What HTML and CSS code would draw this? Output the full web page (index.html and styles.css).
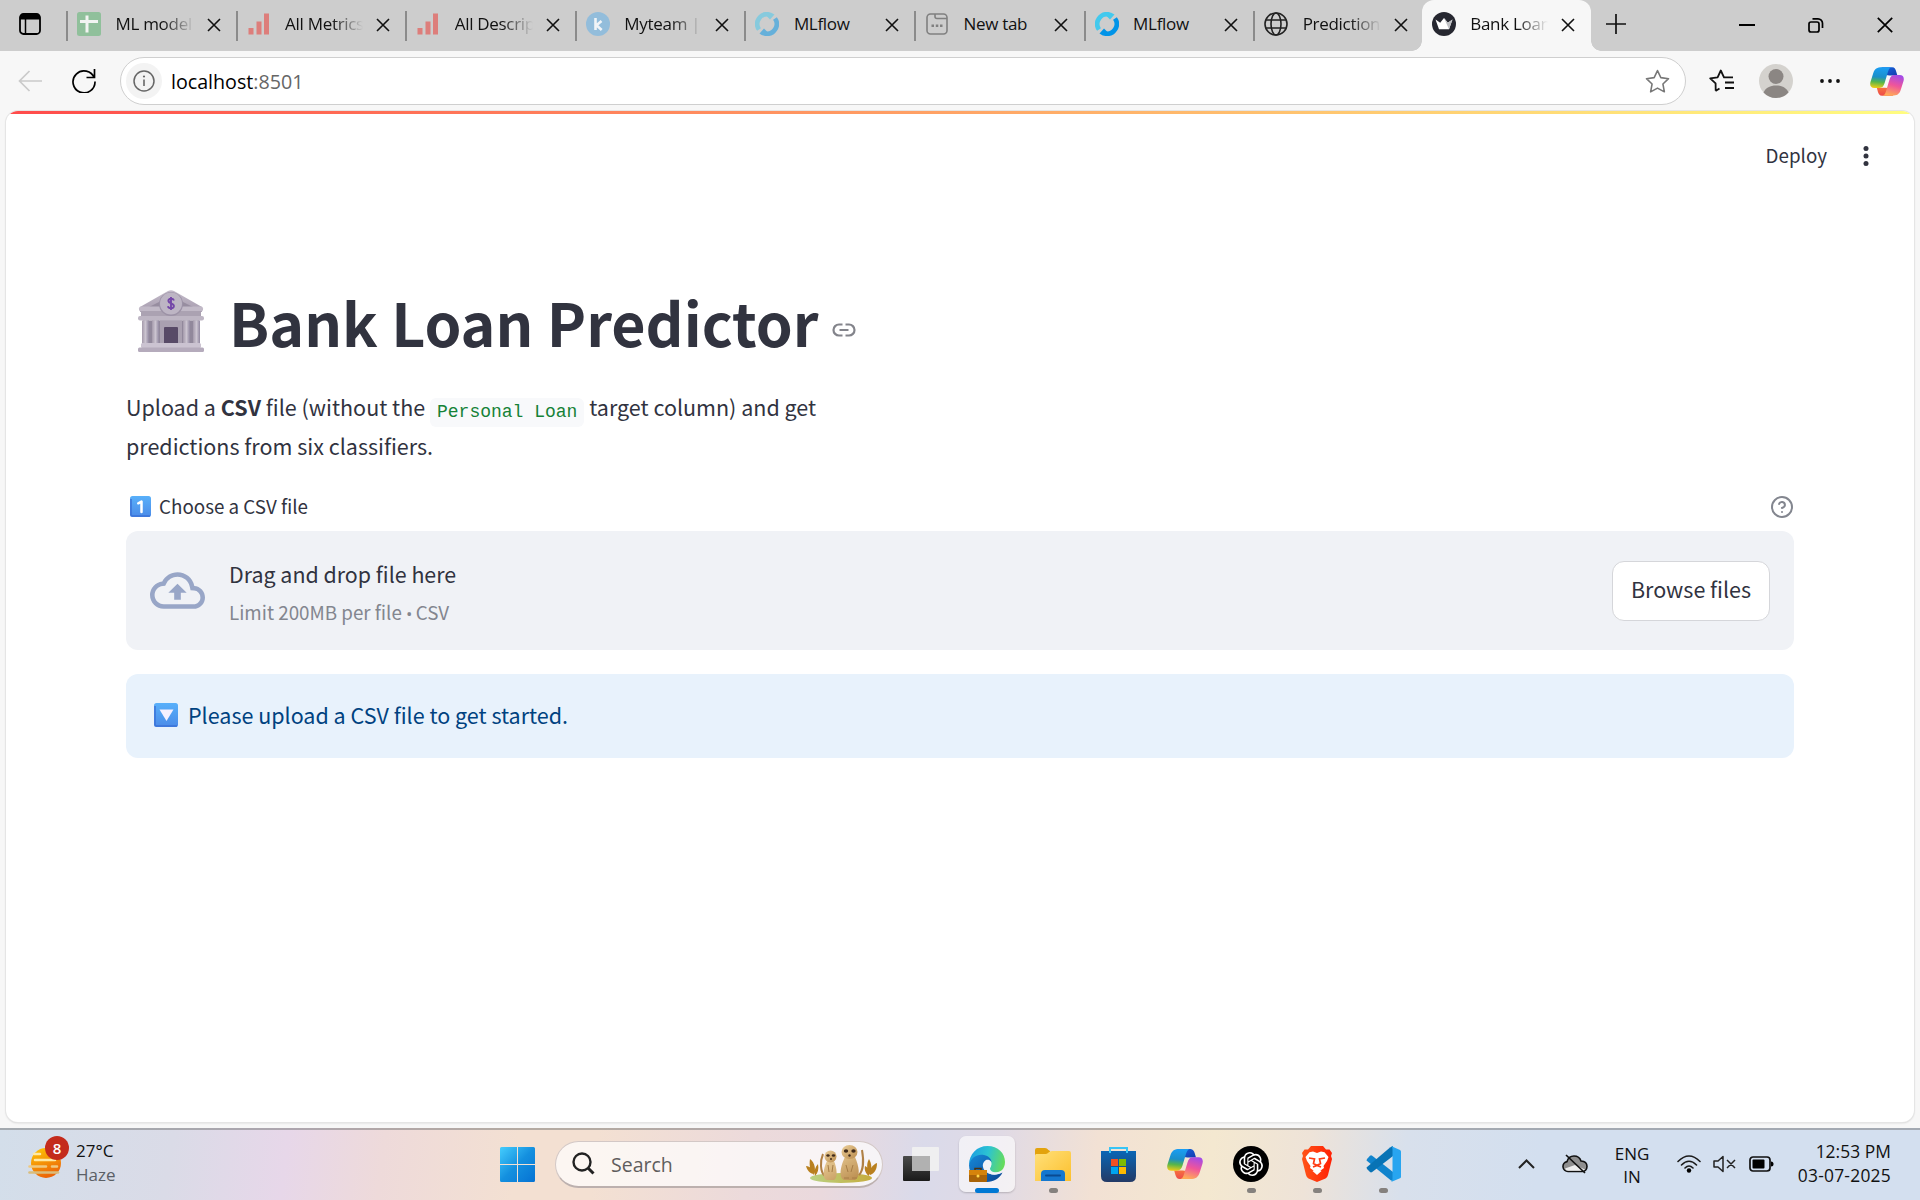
FILE: index.html
```html
<!DOCTYPE html>
<html lang="en">
<head>
<meta charset="utf-8">
<title>Bank Loan Predictor</title>
<link rel="stylesheet" href="styles.css">
</head>
<body>
<svg class="defs" aria-hidden="true">
  <defs>
    <linearGradient id="cpA" x1="0.3" y1="0" x2="0.2" y2="1"><stop offset="0" stop-color="#1a9df2"/><stop offset=".45" stop-color="#1b8fc9"/><stop offset=".7" stop-color="#56b54b"/><stop offset="1" stop-color="#f5cd14"/></linearGradient>
    <linearGradient id="cpB" x1="0.7" y1="0" x2="0.4" y2="1"><stop offset="0" stop-color="#a34be8"/><stop offset=".5" stop-color="#f0559a"/><stop offset="1" stop-color="#ffab57"/></linearGradient>
    <linearGradient id="cpC" x1="0" y1="0" x2="1" y2="1"><stop offset="0" stop-color="#1667e0"/><stop offset="1" stop-color="#143cae"/></linearGradient>
    <linearGradient id="cpD" x1="0" y1="0" x2="0" y2="1"><stop offset="0" stop-color="#f6713f"/><stop offset="1" stop-color="#ee4b4b"/></linearGradient>
    <linearGradient id="stone" x1="0" y1="0" x2="0" y2="1"><stop offset="0" stop-color="#c4bbca"/><stop offset="1" stop-color="#a69cae"/></linearGradient>
    <linearGradient id="pillar" x1="0" y1="0" x2="1" y2="0"><stop offset="0" stop-color="#a49aab"/><stop offset=".5" stop-color="#cbc4d0"/><stop offset="1" stop-color="#9188a0"/></linearGradient>
    <linearGradient id="key" x1="0" y1="0" x2="0" y2="1"><stop offset="0" stop-color="#58b0fa"/><stop offset="1" stop-color="#4b8be8"/></linearGradient>
    <linearGradient id="sun" x1="0" y1="0" x2=".4" y2="1"><stop offset="0" stop-color="#ffca05"/><stop offset="1" stop-color="#ec6608"/></linearGradient>
    <linearGradient id="win" x1="0" y1="0" x2="1" y2="1"><stop offset="0" stop-color="#45cdfd"/><stop offset=".5" stop-color="#1490df"/><stop offset="1" stop-color="#0572d3"/></linearGradient>
    <linearGradient id="edge" x1="0" y1=".3" x2="1" y2=".5"><stop offset="0" stop-color="#1b9de2"/><stop offset=".5" stop-color="#2cc3d2"/><stop offset="1" stop-color="#66dc5b"/></linearGradient>
    <linearGradient id="edge2" x1="0" y1="0" x2="1" y2="1"><stop offset="0" stop-color="#1689d8"/><stop offset="1" stop-color="#0c4593"/></linearGradient>
    <linearGradient id="fold" x1="0" y1="0" x2="1" y2="1"><stop offset="0" stop-color="#ffe07a"/><stop offset="1" stop-color="#fcc02e"/></linearGradient>
    <linearGradient id="store" x1="0" y1="0" x2="0" y2="1"><stop offset="0" stop-color="#0a66b5"/><stop offset="1" stop-color="#233a66"/></linearGradient>
    <linearGradient id="brave" x1="0" y1="0" x2="1" y2="0"><stop offset="0" stop-color="#ff5418"/><stop offset="1" stop-color="#ff2004"/></linearGradient>
    <linearGradient id="fur" x1="0" y1="0" x2="1" y2="1"><stop offset="0" stop-color="#ecd09b"/><stop offset="1" stop-color="#b98b4d"/></linearGradient>
    <linearGradient id="grass" x1="0" y1="0" x2="1" y2="0"><stop offset="0" stop-color="#b9d284"/><stop offset="1" stop-color="#c6ac3c"/></linearGradient>
    <linearGradient id="dark" x1="0" y1="0" x2="0" y2="1"><stop offset="0" stop-color="#4a4a4a"/><stop offset="1" stop-color="#1a1a1a"/></linearGradient>
    <symbol id="close" viewBox="0 0 14 14"><path d="M1 1 13 13M13 1 1 13" fill="none" stroke="#111" stroke-width="1.6"/></symbol>
    <symbol id="bars" viewBox="0 0 24 24"><path d="M1.500 16h5v6.500h-5zM9.500 9.500h5v13h-5zM17 1.500h5v21h-5z" fill="#dd7e7b"/></symbol>
    <symbol id="mlflow" viewBox="0 0 24 24">
      <path d="M4 17.500A9.700 9.700 0 0 1 14 2.500" fill="none" stroke="#43c9ed" stroke-width="4.600"/><path d="M12.500 0q4 0 7 2.600L15 7.600 11.500 4z" fill="#43c9ed"/>
      <path d="M20 6.500A9.700 9.700 0 0 1 10 21.500" fill="none" stroke="#0194e8" stroke-width="4.600"/><path d="M11.500 24q-4 0-7-2.600L9 16.400l3.500 3.600z" fill="#0194e8"/>
    </symbol>
    <symbol id="copilot" viewBox="0 0 36 32">
      <path d="M12 1h11.500c2.600 0 3.600 2.200 4.300 4.600l1.200 4h-8.500L17 9z" fill="url(#cpC)"/>
      <path d="M24.500 31H12.700c-2.600 0-3.700-2-4.400-4.500L7.200 22.500h8.300l4 .5z" fill="url(#cpD)"/>
      <path d="M12.500 1h10c-2 .6-2.900 2.800-3.700 5.600l-3.300 11c-1 3.300-2.500 5.200-5.700 5.200H4.500C1 22.800-.5 20.300.5 16.500L3.500 7C5 2.600 7.500 1 12.500 1z" fill="url(#cpA)"/>
      <path d="M23.500 31h-10c2-.6 2.900-2.800 3.700-5.600l3.300-11c1-3.300 2.500-5.200 5.700-5.200h5.300c3.500 0 5 2.500 4 6.300l-3 9.500c-1.500 4.400-4 6-9 6z" fill="url(#cpB)"/>
    </symbol>
  </defs>
</svg>

<div class="browser">
  <div class="tabstrip">
    <div class="workspace">
      <svg width="22" height="22" viewBox="0 0 22 22"><rect x="1" y="1" width="20" height="20" rx="3.500" fill="none" stroke="#000" stroke-width="1.800"/><path d="M1 4a3 3 0 0 1 3-3h14a3 3 0 0 1 3 3v2.500H1z"/><path d="M6.500 6v15" stroke="#000" stroke-width="1.500"/></svg>
    </div>
    <div class="tab"><svg class="fav" viewBox="0 0 24 24"><rect width="24" height="24" rx="2.500" fill="#90c09b"/><path d="M10 3.500v17M3 9.500h18" stroke="#f2f4f2" stroke-width="3" fill="none"/></svg><span class="tab-title fade">ML model c</span><svg class="x"><use href="#close"/></svg></div>
    <div class="tab"><svg class="fav"><use href="#bars"/></svg><span class="tab-title fade">All Metrics</span><svg class="x"><use href="#close"/></svg></div>
    <div class="tab"><svg class="fav"><use href="#bars"/></svg><span class="tab-title fade">All Descript</span><svg class="x"><use href="#close"/></svg></div>
    <div class="tab"><svg class="fav" viewBox="0 0 24 24"><circle cx="12" cy="12" r="12" fill="#93bddb"/><path d="M9.500 6v12M15.500 9l-5 4.200 5.200 4.800" stroke="#f1f4f7" stroke-width="2.600" fill="none"/></svg><span class="tab-title fade">Myteam | K</span><svg class="x"><use href="#close"/></svg></div>
    <div class="tab"><svg class="fav dim"><use href="#mlflow"/></svg><span class="tab-title">MLflow</span><svg class="x"><use href="#close"/></svg></div>
    <div class="tab"><svg class="fav" viewBox="0 0 24 24"><rect x="2" y="2" width="20" height="20" rx="3.500" fill="none" stroke="#808080" stroke-width="1.600"/><path d="M10 2v2.500a2 2 0 0 0 2 2h10" fill="none" stroke="#808080" stroke-width="1.600"/><path d="M6.500 12.500H9v2.400H6.500zm4.300 0h2.500v2.400h-2.500zm4.200 0h2.500v2.400H15z" fill="#808080"/></svg><span class="tab-title">New tab</span><svg class="x"><use href="#close"/></svg></div>
    <div class="tab"><svg class="fav"><use href="#mlflow"/></svg><span class="tab-title">MLflow</span><svg class="x"><use href="#close"/></svg></div>
    <div class="tab"><svg class="fav" viewBox="0 0 24 24"><g fill="none" stroke="#222" stroke-width="1.600"><circle cx="12" cy="12" r="11"/><ellipse cx="12" cy="12" rx="5" ry="11"/><path d="M2 8h20M2 16h20"/></g></svg><span class="tab-title fade">Predictions</span><svg class="x"><use href="#close"/></svg></div>
    <div class="tab active"><svg class="fav" viewBox="0 0 24 24"><circle cx="12" cy="12" r="12" fill="#262730"/><path d="m3.500 7.500 4.700 3.300L12 6l3.800 4.800 4.700-3.300-3.500 9.700H7z" fill="#fff"/><path d="m12 6 3.800 4.800 4.700-3.300-3.500 9.700z" fill="#bfc0c4"/></svg><span class="tab-title fade">Bank Loan P</span><svg class="x"><use href="#close"/></svg></div>
    <svg class="plus" viewBox="0 0 22 22"><path d="M11 1v20M1 11h20" stroke="#111" stroke-width="1.700"/></svg>
    <div class="wincontrols">
      <svg width="16" height="16" viewBox="0 0 16 16"><path d="M0 8h16" stroke="#000" stroke-width="2"/></svg>
      <svg width="16" height="16" viewBox="0 0 16 16"><rect x="1" y="5" width="10" height="10" rx="2" fill="none" stroke="#000" stroke-width="1.700"/><path d="M4.500 1.800H10a4.500 4.500 0 0 1 4.500 4.500V11" fill="none" stroke="#000" stroke-width="1.700"/></svg>
      <svg width="16" height="16" viewBox="0 0 16 16"><path d="m.8.8 14.400 14.400M15.200.8.8 15.200" stroke="#000" stroke-width="1.700"/></svg>
    </div>
  </div>

  <div class="toolbar">
    <svg class="back" viewBox="0 0 24 22"><path d="M11.500 1 1.500 11l10 10M1.500 11H24" fill="none" stroke="#cacaca" stroke-width="1.700"/></svg>
    <svg class="reload" viewBox="0 0 24 24"><path d="M22.300 9A11 11 0 1 0 23 12.500M22.500 0v8.500h-8" fill="none" stroke="#000" stroke-width="1.700"/></svg>
    <div class="address">
      <span class="info"><svg width="22" height="22" viewBox="0 0 22 22"><circle cx="11" cy="11" r="10" fill="none" stroke="#666" stroke-width="1.500"/><path d="M11 9.500V16" stroke="#666" stroke-width="1.600"/><circle cx="11" cy="6.500" r="1.100" fill="#666"/></svg></span>
      <span class="url">localhost<span class="port">:8501</span></span>
      <svg class="star" viewBox="0 0 24 24"><path d="m12 1.500 3.200 6.800 7.400 1-5.400 5.100 1.400 7.500L12 18.300l-6.600 3.600 1.400-7.500L1.400 9.300l7.400-1z" fill="none" stroke="#777" stroke-width="1.500" stroke-linejoin="round"/></svg>
    </div>
    <svg class="favlist" viewBox="0 0 25 24"><path d="M6.700 21.700 6.600 14.400 1.200 9.300l7.400-1 3.200-6.800L15 8.300h9M6.500 22l4-2.500M16 13.500h9M16 19h9" fill="none" stroke="#111" stroke-width="1.800" stroke-linejoin="round"/></svg>
    <svg class="avatar" viewBox="0 0 34 34"><circle cx="17" cy="17" r="17" fill="#d4d2ce"/><circle cx="17" cy="12.500" r="7.500" fill="#8b8683"/><path d="M4.500 28.500C7 23.500 11 21.500 17 21.500s10 2 12.500 7A17 17 0 0 1 17 34 17 17 0 0 1 4.500 28.500z" fill="#8b8683"/></svg>
    <svg class="more" viewBox="0 0 20 6"><g fill="#111"><circle cx="2" cy="3" r="1.900"/><circle cx="10" cy="3" r="1.900"/><circle cx="18" cy="3" r="1.900"/></g></svg>
    <svg class="cop"><use href="#copilot"/></svg>
  </div>

  <main class="page">
    <div class="rainbow"></div>
    <header class="appbar">
      <span class="deploy">Deploy</span>
      <svg width="6" height="20" viewBox="0 0 6 20"><g fill="#31333f"><circle cx="3" cy="2.500" r="2.500"/><circle cx="3" cy="10" r="2.500"/><circle cx="3" cy="17.500" r="2.500"/></g></svg>
    </header>
    <section class="content">
      <h1>
        <svg class="bank" viewBox="0 0 66 62">
          <path d="M30 1q3-1.500 6 0L64 17v5H2v-5z" fill="url(#stone)"/><path d="M33 6 55 17H11z" fill="#978da0"/>
          <rect x="1" y="16.500" width="64" height="5" rx="2" fill="#c1b9c7"/><rect x="3" y="21" width="60" height="6" fill="#aba2b2"/>
          <rect x="0" y="26" width="66" height="4.500" rx="2" fill="#beb6c4"/>
          <rect x="5" y="30.500" width="56" height="24" fill="#91889b"/>
          <g fill="url(#pillar)"><rect x="4" y="30.500" width="7" height="24"/><rect x="14" y="30.500" width="7" height="24"/><rect x="45" y="30.500" width="7" height="24"/><rect x="55" y="30.500" width="7" height="24"/></g>
          <rect x="22" y="30.500" width="22" height="24" fill="#aaa1b1"/><rect x="26" y="37" width="14" height="17" rx="1" fill="#584a67"/>
          <rect x="3" y="53" width="60" height="5" rx="1.500" fill="#cbc3d1"/><rect x="0" y="57.500" width="66" height="4.500" rx="1.500" fill="#b5abbc"/>
          <circle cx="33" cy="14" r="12" fill="#9c92a6"/><circle cx="33" cy="13.500" r="11" fill="#bdb5c4"/>
          <path d="M36 10.500c-1-2.600-6-2.200-5.600.5s5.500 2 5.500 5c0 2.800-5.200 3-6 .3M33 7v13" fill="none" stroke="#7447a8" stroke-width="1.900"/>
        </svg>
        <span class="h1text">Bank Loan Predictor</span>
        <svg class="anchor" viewBox="0 0 24 14"><path d="M10.500 1.500H7a5.500 5.500 0 0 0 0 11h3.500M13.500 1.500H17a5.500 5.500 0 0 1 0 11h-3.500M7.500 7h9" fill="none" stroke="#83848b" stroke-width="2.200"/></svg>
      </h1>
      <p class="intro">Upload a <b>CSV</b> file (without the <code>Personal Loan</code> target column) and get<br>predictions from six classifiers.</p>
      <div class="label">
        <svg width="21" height="21" viewBox="0 0 21 21"><rect width="21" height="21" rx="2.500" fill="url(#key)"/><path d="M1 3v15.500q0 1.500 1.500 1.500H20" fill="none" stroke="#3b73d8" stroke-width="1.500"/><path d="M8.300 7.300 11.500 5.500v10.500" fill="none" stroke="#fff" stroke-width="2.500" stroke-linejoin="round" stroke-linecap="round"/></svg>
        <span>Choose a CSV file</span>
        <svg class="help" width="24" height="24" viewBox="0 0 24 24"><g fill="none" stroke="#83868f" stroke-width="2" stroke-linecap="round" stroke-linejoin="round"><circle cx="12" cy="12" r="10"/><path d="M9.090 9a3 3 0 0 1 5.830 1c0 2-3 3-3 3M12 17h.01"/></g></svg>
      </div>
      <div class="dropzone">
        <svg class="cloud" viewBox="0 0 24 16"><path d="M19.350 6.040A7.490 7.490 0 0 0 12 0C9.110 0 6.600 1.640 5.350 4.040A5.994 5.994 0 0 0 0 10c0 3.310 2.690 6 6 6h13c2.760 0 5-2.240 5-5 0-2.640-2.050-4.780-4.650-4.960zM19 14H6c-2.210 0-4-1.790-4-4 0-2.050 1.530-3.760 3.560-3.970l1.070-.11.5-.95A5.469 5.469 0 0 1 12 2c2.620 0 4.880 1.860 5.390 4.430l.3 1.500 1.530.11A2.980 2.980 0 0 1 22 11c0 1.650-1.350 3-3 3zM8 9h2.550v3h2.900V9H16l-4-4z" fill="#98a6c7"/></svg>
        <div class="droptext"><div class="drag">Drag and drop file here</div><div class="limit">Limit 200MB per file <span class="dot">•</span> CSV</div></div>
        <button class="browse">Browse files</button>
      </div>
      <div class="notice">
        <svg width="24" height="24" viewBox="0 0 24 24"><rect width="24" height="24" rx="2.500" fill="url(#key)"/><path d="M1 3v18.500q0 1.500 1.500 1.500H23" fill="none" stroke="#3b73d8" stroke-width="1.500"/><path d="M5.500 6.500h14L12.500 18z" fill="#f6f0ff"/></svg>
        <span>Please upload a CSV file to get started.</span>
      </div>
    </section>
  </main>
</div>

<footer class="taskbar">
  <div class="weather">
    <div class="sun">
      <svg width="34" height="32" viewBox="0 0 34 32"><circle cx="18" cy="16" r="15" fill="url(#sun)"/><g stroke-linecap="round" stroke-width="2.600"><path d="M6 7h6M7 13h20" stroke="#ffe9a4"/><path d="M1.500 19.500H18M24 19.500h5" stroke="#efc980"/><path d="M1.500 25.500H30" stroke="#d9bd7d"/></g></svg>
      <span class="badge">8</span>
    </div>
    <div class="wtext"><div>27°C</div><div class="grey">Haze</div></div>
  </div>
  <div class="apps">
    <svg class="start" viewBox="0 0 35 35"><path d="M1.500 0H17v17H0V1.500Q0 0 1.500 0zM18 0h15.500Q35 0 35 1.500V17H18zM0 18h17v17H1.500Q0 35 0 33.500zM18 18h17v15.500q0 1.500-1.500 1.500H18z" fill="url(#win)"/></svg>
    <div class="search">
      <svg width="23" height="23" viewBox="0 0 23 23"><circle cx="10" cy="10" r="8.500" fill="none" stroke="#222" stroke-width="2.400"/><path d="m16 16 5.500 5.500" stroke="#222" stroke-width="3"/></svg>
      <span>Search</span>
      <svg class="meerkats" viewBox="0 0 72 38">
        <ellipse cx="35" cy="33" rx="31" ry="5" fill="url(#grass)"/>
        <path d="M19 31C14 27 14 16 17 9M53 30c4-4 5-14 3-25" fill="none" stroke="#b08045" stroke-width="2"/>
        <g fill="#b9801f"><path d="M4 14c5 4 6 10 4 16-4-4-5-10-4-16zM12 19c1 5 0 9-3 12-1-5 0-9 3-12zM0 21c4 0 8 4 8 8-4 0-7-4-8-8zM63 14c3 5 3 10 1 16-3-5-4-11-1-16zM71 18c0 6-2 10-7 12 0-6 2-10 7-12zM59 21c4 2 5 6 4 10-3-2-5-6-4-10z"/></g>
        <g fill="url(#fur)"><path d="M21 16h7c3 7 4 17 0 19h-7c-5-1-4-11 0-19zM39 12h10c4 9 6 20 0 23H38c-6-3-3-15 1-23z"/><ellipse cx="24.500" cy="11.500" rx="6" ry="6"/><ellipse cx="43.500" cy="7" rx="8" ry="7"/></g>
        <g fill="#402b1c"><ellipse cx="22" cy="10.500" rx="1.700" ry="1.300"/><ellipse cx="27.500" cy="10.500" rx="1.700" ry="1.300"/><ellipse cx="40" cy="6" rx="2.200" ry="1.700"/><ellipse cx="47.500" cy="6" rx="2.200" ry="1.700"/><circle cx="25" cy="14" r="1"/><circle cx="43.500" cy="10.500" r="1.200"/></g>
        <path d="M22 20l1 7M27 20l-1 7M40 20l2 7M47 20l-2 7M38 33h5M46 33h5" stroke="#a67d47" fill="none"/>
      </svg>
    </div>
    <div class="app"><svg width="36" height="36" viewBox="0 0 36 36"><rect x="0" y="10" width="27" height="25" rx="1" fill="url(#dark)"/><rect x="9" y="1" width="27" height="24" rx="1" fill="#efefef" opacity=".96"/><path d="M9 10h18v15H9z" fill="#b1b1b1"/></svg></div>
    <div class="app current"><svg width="36" height="36" viewBox="0 0 36 36"><path d="M0 19C0 8 8 0 18.500 0 29 0 36 7 36 16c0 7-4.500 10.500-10 10.500-5 0-6.500-2-5-4.500 2.600-4 .5-8-4-9C10 11.500 3 14 0 19z" fill="url(#edge)"/><path d="M0 19C2 11 9 7.500 15 9c4.500 1 7.500 4 7.500 7-5-4-9.500 0-8.500 5 1 5 7 8 12 7.500 3 0 5.500-1 7.500-2-3 6-9 9.500-15.500 9.500C8 36 0 29 0 19z" fill="url(#edge2)"/><path d="M17 14c3-1 6 1 5.500 4.500-.4 2.500-2.200 3.500-1 5.500 1.500 3 8 3.200 12.500.5-4 4.500-10 5.500-14.500 2.500-5-3.300-6.500-10.500-2.500-13z" fill="#f1f3f7"/><rect x="0" y="24" width="18" height="12" rx="1" fill="#a96308"/><path d="M0 24h18v5H0z" fill="#d5830b"/><path d="M6 24v-1.500h6V24" fill="none" stroke="#4b3211" stroke-width="1.500"/><circle cx="9" cy="30" r="1.500" fill="#ffd84b"/></svg></div>
    <div class="app running"><svg width="36" height="36" viewBox="0 0 36 36"><path d="M0 4q0-2 2-2h8q2 0 3.500 2L15 5v6H0z" fill="#e3a30d"/><path d="M0 10c0-1.500.5-2 2-2h9c2 0 3-3 6-3h17q2 0 2 2v28H0z" fill="url(#fold)"/><path d="M6 35v-7q0-4 4-4h16q4 0 4 4v7z" fill="#1577cf"/><path d="M11 29.500h14" stroke="#0a4a91" stroke-width="2" stroke-linecap="round"/></svg></div>
    <div class="app"><svg width="36" height="36" viewBox="0 0 36 36"><path d="M0 5h35v25q0 6-6 6H6q-6 0-6-6z" fill="url(#store)"/><path d="M9 7V2h17v5" fill="none" stroke="#37c4f5" stroke-width="2"/><path d="M10 13h7v7h-7z" fill="#f25022"/><path d="M18 13h7v7h-7z" fill="#7fba00"/><path d="M10 21h7v7h-7z" fill="#00a4ef"/><path d="M18 21h7v7h-7z" fill="#ffb900"/></svg></div>
    <div class="app"><svg width="36" height="32"><use href="#copilot"/></svg></div>
    <div class="app running"><svg width="36" height="36" viewBox="0 0 36 36"><circle cx="18" cy="18" r="18"/><g transform="translate(6 6)"><path fill="#fff" d="M22.282 9.821a5.985 5.985 0 0 0-.516-4.910 6.046 6.046 0 0 0-6.510-2.900A6.065 6.065 0 0 0 4.981 4.180a5.985 5.985 0 0 0-3.998 2.900 6.046 6.046 0 0 0 .743 7.097 5.980 5.980 0 0 0 .510 4.911 6.051 6.051 0 0 0 6.515 2.900A5.985 5.985 0 0 0 13.260 24a6.056 6.056 0 0 0 5.772-4.206 5.990 5.990 0 0 0 3.997-2.900 6.056 6.056 0 0 0-.747-7.073zM13.260 22.430a4.476 4.476 0 0 1-2.876-1.040l.141-.081 4.779-2.758a.795.795 0 0 0 .392-.681v-6.737l2.020 1.168a.071.071 0 0 1 .038.052v5.583a4.504 4.504 0 0 1-4.494 4.494zM3.600 18.304a4.470 4.470 0 0 1-.535-3.014l.142.085 4.783 2.759a.771.771 0 0 0 .780 0l5.843-3.369v2.332a.080.080 0 0 1-.033.062L9.740 19.950a4.500 4.500 0 0 1-6.140-1.646zM2.340 7.896a4.485 4.485 0 0 1 2.366-1.973V11.600a.766.766 0 0 0 .388.676l5.815 3.355-2.020 1.168a.076.076 0 0 1-.071 0l-4.830-2.786A4.504 4.504 0 0 1 2.340 7.872zm16.597 3.855-5.833-3.387L15.119 7.200a.076.076 0 0 1 .071 0l4.830 2.791a4.494 4.494 0 0 1-.676 8.105v-5.678a.790.790 0 0 0-.407-.667zm2.010-3.023-.141-.085-4.774-2.782a.776.776 0 0 0-.785 0L9.409 9.230V6.897a.066.066 0 0 1 .028-.061l4.830-2.787a4.500 4.500 0 0 1 6.680 4.660zM8.307 12.863l-2.020-1.164a.080.080 0 0 1-.038-.057V6.075a4.500 4.500 0 0 1 7.375-3.453l-.142.080L8.704 5.460a.795.795 0 0 0-.393.681zm1.097-2.365 2.602-1.500 2.607 1.500v2.999l-2.597 1.500-2.607-1.500z"/></g></svg></div>
    <div class="app running"><svg width="36" height="36" viewBox="0 0 36 36"><path d="M12 0h12l3 3.500h3.500L33 7l-1 3 1 3-4 16q-.5 2-2.500 3.500L18 36l-8.500-3.500Q7.500 31 7 29L3 13l1-3-1-3 2.500-3.500H9z" fill="url(#brave)"/><path d="m18 7 4-1.500 3.500.7L29.500 11l-1.500 4-3.500 5 .5 2-7 5-7-5 .5-2L8 15l-1.500-4 4-4.800 3.500-.7z" fill="#fff"/><path d="m10 12 5.500 1-1 4.500 3.500 2 3.500-2-1-4.500 5.500-1M14 21l4-1.500 4 1.500" fill="none" stroke="#ff3b13" stroke-width="1.700"/><path d="m13.500 25 4.500-2.500 4.500 2.500-4.500 4z" fill="#fff"/></svg></div>
    <div class="app running"><svg width="36" height="36" viewBox="0 0 36 36"><path d="M2 13 5 9.700q1-.9 2.200 0L28 26v9L26 34.500 1.500 14.500z" fill="#1184cd"/><path d="M2 23 5 26q1 .9 2.200 0L28 10V0l-3 1.500L1.500 21.500z" fill="#0873b5"/><path d="M26 0l9 4q1 .5 1 1.700v25q0 1-1 1.500l-9 3.800q1.500-1 1.500-3V3q0-2-1.500-3z" fill="#28a5f0"/></svg></div>
  </div>
  <div class="tray">
    <svg class="chev" viewBox="0 0 17 10"><path d="m1 9 7.500-7.500L16 9" fill="none" stroke="#222" stroke-width="2"/></svg>
    <svg class="onedrive" viewBox="0 0 26 20"><path d="M6 17.500a5 5 0 0 1-1-9.900C6 4 9 2 12 2c3.500 0 6 2 7 5 3.500.2 6 2.300 6 5.500 0 3-2.200 5-5 5z" fill="#8f8f8f" stroke="#111" stroke-width="1.600"/><path d="M3 14.500 13 11l10 4.500q-1.500 1.200-3 1.200H6q-2 0-3-2.200z" fill="#eee"/><path d="m4 1 19 18" stroke="#111" stroke-width="1.700"/></svg>
    <div class="lang"><div>ENG</div><div>IN</div></div>
    <svg class="wifi" viewBox="0 0 24 18"><g fill="none" stroke="#1b1b1b" stroke-width="1.600" stroke-linecap="round"><path d="M1 6.500q11-11 22 0M4.500 10q7.500-7.500 15 0M8 13q4-4 8 0"/></g><circle cx="12" cy="15.500" r="2.200"/></svg>
    <svg class="spk" viewBox="0 0 24 18"><path d="M1 6v6h4l5 4.500v-15L5 6zM14 5l8 8M22 5l-8 8" fill="none" stroke="#222" stroke-width="1.500" stroke-linejoin="round"/></svg>
    <svg class="bat" viewBox="0 0 25 16"><rect x="1" y="1" width="20" height="14" rx="3" fill="none" stroke="#111" stroke-width="1.700"/><rect x="3.500" y="3.500" width="12" height="9" rx="1"/><path d="M22 5.500q2.500 0 2.500 2.500T22 10.500z"/></svg>
    <div class="clock"><div>12:53 PM</div><div class="date">03-07-2025</div></div>
  </div>
</footer>
</body>
</html>
```
FILE: styles.css
```css
* { box-sizing: border-box; }
body {
  margin: 0;
  width: 1920px;
  height: 1200px;
  overflow: hidden;
  display: flex;
  flex-direction: column;
  background: #f7f7f7;
  font-family: "Open Sans", "Noto Sans", sans-serif;
  color: #111;
}
svg { display: block; flex: none; }
.defs { position: absolute; width: 0; height: 0; }

.browser { height: 1128px; display: flex; flex-direction: column; }

/* Tab strip */
.tabstrip { height: 51px; flex: none; background: #cdcdcd; display: flex; align-items: flex-start; }
.workspace { width: 67px; padding: 13px 0 0 19px; }
.tab { position: relative; width: 169.600px; height: 51px; flex: none; display: flex; align-items: center; padding: 0 0 3px 10px; }
.tab::before { content: ""; position: absolute; left: -1px; top: 11px; width: 2px; height: 30px; background: #8b8b8b; }
.fav { width: 24px; height: 24px; }
.dim { opacity: .5; }
.tab-title { width: 80px; margin-left: 14.500px; font-size: 17px; line-height: 24px; letter-spacing: -.3px; white-space: nowrap; overflow: hidden; }
.fade { width: 78px; margin-right: 2px; -webkit-mask-image: linear-gradient(90deg, #000 60%, transparent 100%); mask-image: linear-gradient(90deg, #000 60%, transparent 100%); }
.x { width: 14px; height: 14px; margin: 2px 0 0 11px; }
.active { margin-left: -2px; background: #f7f7f7; border-radius: 12px 12px 0 0; }
.active::before { left: -10px; top: auto; bottom: 0; width: 10px; height: 10px; background: radial-gradient(circle at 0 0, transparent 9.500px, #f7f7f7 10px); }
.active::after { content: ""; position: absolute; right: -10px; bottom: 0; width: 10px; height: 10px; background: radial-gradient(circle at 100% 0, transparent 9.500px, #f7f7f7 10px); }
.plus { width: 22px; height: 22px; margin: 13px 0 0 14px; }
.wincontrols { margin: 17px 27px 0 auto; display: flex; gap: 53px; }

/* Toolbar */
.toolbar { height: 60px; flex: none; display: flex; align-items: center; padding-left: 18px; }
.back { width: 24px; height: 22px; }
.reload { width: 24px; height: 24px; margin-left: 30px; }
.address { width: 1566px; height: 48px; margin-left: 24px; border: 1px solid #cfcfcf; border-radius: 24px; background: #fff; display: flex; align-items: center; padding: 0 15px 0 5px; }
.info { width: 36px; height: 36px; border-radius: 50%; background: #f3f3f3; display: grid; place-items: center; }
.url { flex: 1; margin-left: 9px; font-size: 19.700px; letter-spacing: -.02px; line-height: 28px; padding-top: 1px; color: #000; }
.port { color: #666; }
.star { width: 25px; height: 25px; }
.favlist { width: 25px; height: 24px; margin-left: 23px; }
.avatar { width: 34px; height: 34px; margin-left: 25px; }
.more { width: 20px; height: 6px; margin-left: 27px; }
.cop { width: 34px; height: 31px; margin-left: 30px; }

/* Streamlit page */
.page {
  width: 1908px; height: 1011px; margin-left: 6px; flex: none;
  background: #fff; border-radius: 12px; overflow: hidden;
  box-shadow: 0 0 0 1px #e5e5e5, 0 1px 2px #c9c9c9;
  font-family: "Noto Sans CJK SC", "Open Sans", sans-serif;
  color: #31333f;
}
.rainbow { height: 3px; background: linear-gradient(90deg, #ff4b4b, #fffd80); }
.appbar { height: 87px; display: flex; align-items: center; justify-content: flex-end; gap: 36px; padding: 0 45px 3px 0; }
.deploy { font-size: 18.800px; line-height: 28px; padding-bottom: 3px; }
.content { width: 1668px; margin: 80px 0 0 120px; }
h1 { margin: 0; height: 79px; display: flex; font-size: 59.100px; line-height: 80px; font-weight: 700; white-space: nowrap; }
.bank { width: 66px; height: 62px; margin: 9px 0 0 12px; }
.h1text { margin-left: 25px; }
.anchor { width: 24px; height: 14px; margin: 42px 0 0 13px; }
.intro { margin: 27px 0 0; font-size: 21.500px; line-height: 39px; }
code { font-family: "Liberation Mono", monospace; font-size: 18px; line-height: 24px; color: #158237; background: #f8f9fb; border-radius: 6px; padding: 4px 7px 5px; position: relative; top: 1px; }
.label { height: 36px; margin-top: 23px; display: flex; align-items: center; font-size: 18.800px; line-height: 32px; }
.label svg { margin-left: 4px; }
.label span { margin: -1px 0 0 8px; }
.label .help { margin: 2px 0 0 auto; }
.dropzone { margin-top: 7px; height: 119px; background: #f0f2f6; border-radius: 12px; display: flex; align-items: center; padding: 0 24px; }
.cloud { width: 55px; height: 37px; }
.droptext { margin-left: 24px; flex: 1; padding-top: 4px; }
.drag { font-size: 21.400px; line-height: 38px; }
.limit { font-size: 18.800px; line-height: 38px; color: #83868f; }
.dot { font-family: "Open Sans", sans-serif; font-size: 17px; line-height: 1; letter-spacing: -1px; }
.browse { width: 158px; height: 60px; border: 1px solid #d5d6da; border-radius: 12px; background: #fff; padding: 0 0 3px; font: 21.500px/38px "Noto Sans CJK SC", sans-serif; color: #31333f; }
.notice { margin-top: 24px; height: 84px; border-radius: 12px; background: #e8f2fc; color: #004280; display: flex; align-items: center; padding: 0 28px 2px; font-size: 21.500px; line-height: 38px; }
.notice span { margin-left: 10px; }

/* Windows taskbar */
.taskbar {
  height: 72px; flex: none; position: relative; display: flex; align-items: center;
  background: linear-gradient(97deg, #d3deea 0, #dadbe7 9%, #e7d7e9 15%, #eedada 20%, #f3e0d2 27%, #f3e0d2 31%, #ecdadb 39%, #ead9dd 43%, #dadaea 48%, #e0dae5 52%, #f2e1d4 57%, #f4e8d0 63%, #eee3d8 68%, #d8e0ec 73%, #d3dfef 80%, #d3dfef 100%);
  box-shadow: inset 0 2px rgba(110,110,110,.48);
  font-size: 17px;
}
.weather { width: 500px; display: flex; }
.sun { width: 34px; margin: 5px 0 0 28px; position: relative; }
.badge { position: absolute; left: 17px; top: -11px; width: 24px; height: 24px; border-radius: 50%; background: #c42b1c; color: #fff; font-size: 15px; font-weight: 600; line-height: 24px; text-align: center; }
.wtext { margin: -3px 0 0 14px; line-height: 24px; letter-spacing: 0; }
.grey { color: #5b5f66; }
.apps { display: flex; align-items: center; height: 72px; }
.start { width: 35px; height: 35px; }
.search { width: 328px; height: 47px; margin: 0 5px 0 20px; border: 1px solid #d3c8c6; border-bottom: 2px solid #bcb0ae; border-radius: 24px; background: rgba(255,255,255,.7); display: flex; align-items: center; padding: 0 4px 0 16px; font-size: 19.500px; color: #5f5d5d; }
.search span { margin: 1px auto 0 16px; }
.meerkats { width: 72px; height: 38px; }
.app { width: 66px; height: 72px; display: grid; place-items: center; position: relative; }
.app svg { position: relative; }
.running::after, .current::after { content: ""; position: absolute; left: 29px; bottom: 7px; width: 9px; height: 5px; border-radius: 3px; background: #85817e; }
.current::after { left: 21px; width: 24px; background: #0078d4; }
.current::before { content: ""; position: absolute; left: 5px; top: 8px; width: 56px; height: 56px; border-radius: 7px; background: rgba(255,255,255,.6); box-shadow: 0 1px 2px rgba(0,0,0,.2); }
.tray { margin-left: auto; display: flex; align-items: center; padding-right: 29px; }
.chev { width: 17px; height: 10px; }
.onedrive { width: 26px; height: 20px; margin-left: 27px; }
.lang { width: 40px; margin: 1px 25px 0 24px; text-align: center; line-height: 23px; letter-spacing: -.1px; }
.wifi { width: 24px; height: 18px; }
.spk { width: 24px; height: 18px; margin-left: 12px; }
.bat { width: 25px; height: 16px; margin-left: 12px; }
.clock { width: 117px; text-align: right; line-height: 24px; margin-top: -2px; font-size: 17.400px; letter-spacing: .05px; }
.date { letter-spacing: .25px; }
```
